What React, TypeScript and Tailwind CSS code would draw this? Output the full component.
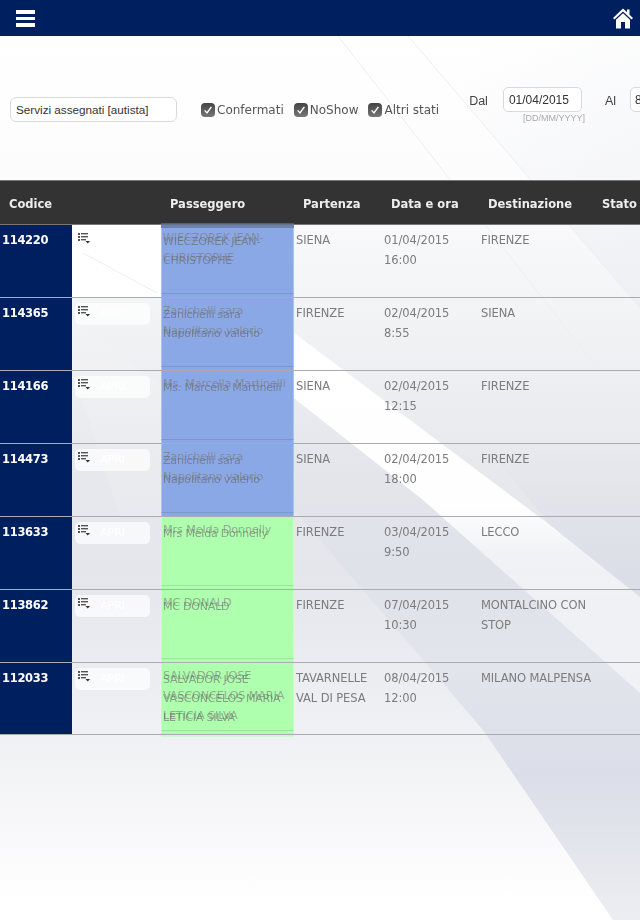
import React from "react";

const GRID = "grid grid-cols-[72px_89px_133px_89px_97px_114px_46px] w-[640px]";

type Row = { code: string; names: string[]; from: string[]; date: string; time: string; to: string[]; tone: "blue" | "green"; last?: boolean };

const rows: Row[] = [
  { code: "114220", names: ["WIECZOREK JEAN-", "CHRISTOPHE"], from: ["SIENA"], date: "01/04/2015", time: "16:00", to: ["FIRENZE"], tone: "blue" },
  { code: "114365", names: ["Zanichelli sara", "Napolitano valerio"], from: ["FIRENZE"], date: "02/04/2015", time: "8:55", to: ["SIENA"], tone: "blue" },
  { code: "114166", names: ["Ms. Marcella Martinelli"], from: ["SIENA"], date: "02/04/2015", time: "12:15", to: ["FIRENZE"], tone: "blue" },
  { code: "114473", names: ["Zanichelli sara", "Napolitano valerio"], from: ["SIENA"], date: "02/04/2015", time: "18:00", to: ["FIRENZE"], tone: "blue" },
  { code: "113633", names: ["Mrs Melda Donnelly"], from: ["FIRENZE"], date: "03/04/2015", time: "9:50", to: ["LECCO"], tone: "green" },
  { code: "113862", names: ["MC DONALD"], from: ["FIRENZE"], date: "07/04/2015", time: "10:30", to: ["MONTALCINO CON", "STOP"], tone: "green" },
  { code: "112033", names: ["SALVADOR JOSE", "VASCONCELOS MARIA", "LETICIA SILVA"], from: ["TAVARNELLE", "VAL DI PESA"], date: "08/04/2015", time: "12:00", to: ["MILANO MALPENSA"], tone: "green", last: true },
];

function Backdrop() {
  return (
    <svg className="absolute left-0 top-0" width="640" height="920" viewBox="0 0 640 920">
      <defs>
        <linearGradient id="base" x1="0" y1="0" x2="0" y2="920" gradientUnits="userSpaceOnUse">
          <stop offset="0.04" stopColor="#ffffff" />
          <stop offset="0.2" stopColor="#fcfcfd" />
          <stop offset="0.33" stopColor="#f3f4f6" />
          <stop offset="0.5" stopColor="#e8e9ed" />
          <stop offset="0.62" stopColor="#e4e6ec" />
          <stop offset="0.8" stopColor="#f0f1f4" />
          <stop offset="0.9" stopColor="#f8f8fa" />
          <stop offset="0.98" stopColor="#ffffff" />
        </linearGradient>
        <linearGradient id="band" x1="0" y1="330" x2="0" y2="700" gradientUnits="userSpaceOnUse">
          <stop offset="0" stopColor="#ffffff" stopOpacity="1" />
          <stop offset="0.48" stopColor="#ffffff" stopOpacity="0.95" />
          <stop offset="0.6" stopColor="#ffffff" stopOpacity="0.5" />
          <stop offset="1" stopColor="#ffffff" stopOpacity="0.2" />
        </linearGradient>
        <linearGradient id="dark" x1="0" y1="400" x2="0" y2="920" gradientUnits="userSpaceOnUse">
          <stop offset="0" stopColor="#c3c8da" stopOpacity="0.05" />
          <stop offset="0.5" stopColor="#c3c8da" stopOpacity="0.2" />
          <stop offset="0.72" stopColor="#c3c8da" stopOpacity="0.5" />
          <stop offset="1" stopColor="#c8ccd8" stopOpacity="0.35" />
        </linearGradient>
        <linearGradient id="rightGrey" x1="0" y1="440" x2="0" y2="600" gradientUnits="userSpaceOnUse">
          <stop offset="0" stopColor="#c3c8da" stopOpacity="0" />
          <stop offset="1" stopColor="#c3c8da" stopOpacity="0.3" />
        </linearGradient>
        <linearGradient id="topGrey" x1="460" y1="60" x2="640" y2="300" gradientUnits="userSpaceOnUse">
          <stop offset="0" stopColor="#e9ebf0" stopOpacity="0" />
          <stop offset="1" stopColor="#e9ebf0" stopOpacity="0.5" />
        </linearGradient>
      </defs>
      <rect x="0" y="0" width="640" height="920" fill="url(#base)" />
      <polygon points="0,225 161,225 161,297 72,297 0,297" fill="#ffffff" />
      <line x1="83" y1="253" x2="157" y2="293" stroke="#eceef1" strokeWidth="1" />
      <polygon points="83,330 161,385 161,516 120,516 72,370 72,320" fill="#ffffff" fillOpacity="0.12" />
      <polygon points="290,330 550,525 640,597 640,693 423,500 290,395" fill="url(#band)" />
      <polygon points="290,505 483,730 613,920 640,920 640,693 423,500 290,395" fill="url(#dark)" />
      <polygon points="480,440 640,440 640,597 550,525" fill="url(#rightGrey)" />
      <polygon points="408,36 640,308 640,36" fill="url(#topGrey)" />
      <line x1="338" y1="36" x2="640" y2="423" stroke="#eceef1" strokeWidth="1" />
      <line x1="408" y1="36" x2="640" y2="308" stroke="#eceef1" strokeWidth="1" />
    </svg>
  );
}

function Check({ label }: { label: string }) {
  return (
    <label className="flex items-center gap-[2px] text-[12px] leading-none text-[#555] font-['DejaVu_Sans',sans-serif] shrink-0">
      <span className="flex h-[14px] w-[14px] items-center justify-center rounded-[4px] bg-gradient-to-b from-[#444] to-[#777]">
        <svg width="10" height="10" viewBox="0 0 10 10" fill="none" stroke="#fff" strokeWidth="1.4">
          <path d="M1.6 5.4 L4 8 L8.4 1.8" />
        </svg>
      </span>
      {label}
    </label>
  );
}

function ListIcon() {
  return (
    <svg className="absolute left-[6px] top-[2px]" width="12" height="11" viewBox="0 0 12 11" fill="#555">
      <rect x="0" y="0" width="2" height="2" />
      <rect x="3" y="0" width="7" height="1.4" />
      <rect x="0" y="3" width="2" height="2" />
      <rect x="3" y="3" width="7" height="1.4" />
      <rect x="0" y="6" width="2" height="2" />
      <rect x="3" y="6" width="5" height="1.4" />
      <polygon points="7.5,8 12,8 9.75,10.5" fill="#333" />
    </svg>
  );
}

function TableRow({ row, index }: { row: Row; index: number }) {
  const isBlue = row.tone === "blue";
  return (
    <div className={`${GRID} ${row.last ? "h-[72px]" : "h-[73px]"} border-b border-[#a9abb0] text-[11.5px] tracking-[-0.1px] leading-[20px] text-[#7c7c7c] font-['DejaVu_Sans',sans-serif]`}>
      <div className="bg-[#001f5f] pl-[2px] pt-[5px] text-[11.5px] tracking-[-0.3px] font-bold text-white">{row.code}</div>
      <div className="relative pl-[3px] pt-[5px]">
        <div className="flex h-[22px] w-[75px] items-center justify-center rounded-[5px] bg-white/70 text-[11px] text-white">APRI</div>
        <div className="absolute left-0 top-[6px]"><ListIcon /></div>
      </div>
      <div className={`relative ${isBlue ? "bg-[#8ba8e6]" : "bg-[#aeffae]"} shadow-[inset_1px_0_0_rgba(255,255,255,0.3),inset_-1px_0_0_rgba(255,255,255,0.3)] pl-[2px] pt-[3px] text-[11.2px] leading-[20px] text-[#777]/60`}>
        {index === 0 && <div className="absolute -top-[2px] left-0 right-0 h-[5px] bg-[#5f7098]/70" />}
        {row.names.map((n) => (
          <div key={n} className="whitespace-nowrap">{n}</div>
        ))}
        <div className="absolute left-[2px] top-[7px] text-[11px] leading-[19px] tracking-[-0.2px] text-[#666]/60">
          {row.names.map((n) => (
            <div key={n} className="whitespace-nowrap">{n}</div>
          ))}
        </div>
        <div className="absolute bottom-[3px] left-0 right-0 h-px bg-black/10" />
        {row.last && <div className="absolute -bottom-[3px] left-0 right-0 h-[2px] bg-[#aeffae]/50" />}
      </div>
      <div className="pl-[2px] pt-[5px]">
        {row.from.map((t) => <div key={t}>{t}</div>)}
      </div>
      <div className="pl-px pt-[5px]">
        <div>{row.date}</div>
        <div>{row.time}</div>
      </div>
      <div className="pl-px pt-[5px]">
        {row.to.map((t) => <div key={t} className="whitespace-nowrap">{t}</div>)}
      </div>
      <div />
    </div>
  );
}

export default function App() {
  const head = ["Codice", "", "Passeggero", "Partenza", "Data e ora", "Destinazione", "Stato"];
  return (
    <div className="relative h-[920px] w-[640px] overflow-hidden">
      <Backdrop />
      <div className="relative blur-[0.35px]">
        <header className="flex h-[36px] items-center justify-between bg-[#001f5f] pl-[16px] pr-[7px]">
          <div className="flex w-[19px] flex-col gap-[3px]">
            <span className="h-[4px] bg-white" />
            <span className="h-[3.5px] bg-white" />
            <span className="h-[3.5px] bg-white" />
          </div>
          <svg width="20" height="21" viewBox="0 0 20 21" fill="#fff">
            <path d="M10 0.5 L0 10 L1.4 11.6 L10 3.5 L18.6 11.6 L20 10 L16.5 6.7 V1.5 H14 V4.3 Z" />
            <path d="M10 5.2 L3 11.8 V20.5 H8 V14 H12 V20.5 H17 V11.8 Z" />
          </svg>
        </header>

        <section className="flex h-[144px] w-[720px] items-start pl-[10px]">
          <div className="mt-[61px] flex h-[25px] w-[167px] shrink-0 items-center rounded-[6px] border border-[#d8d9dc] bg-white pl-[5px] font-['Liberation_Sans',sans-serif] text-[11.7px] text-[#333]">
            Servizi assegnati [autista]
          </div>
          <div className="ml-[24px] mt-[67px] flex shrink-0 gap-[10px]">
            <Check label="Confermati" />
            <Check label="NoShow" />
            <Check label="Altri stati" />
          </div>
          <div className="ml-[30px] mt-[58px] shrink-0 font-['Liberation_Sans',sans-serif] text-[12.5px] leading-[14px] text-[#444]">Dal</div>
          <div className="ml-[15px] mt-[51px] flex w-[84px] shrink-0 flex-col">
            <div className="flex h-[25px] w-[79px] items-center rounded-[5px] border border-[#d8d9dc] bg-white pl-[5px] font-['Liberation_Sans',sans-serif] text-[12px] text-[#333]">01/04/2015</div>
            <div className="mt-[1px] pl-[20px] font-['Liberation_Sans',sans-serif] text-[9px] leading-[11px] whitespace-nowrap text-[#aaa]">[DD/MM/YYYY]</div>
          </div>
          <div className="ml-[18px] mt-[58px] shrink-0 font-['Liberation_Sans',sans-serif] text-[12.5px] leading-[14px] text-[#444]">Al</div>
          <div className="ml-[14px] mt-[51px] flex h-[25px] w-[79px] shrink-0 items-center rounded-[5px] border border-[#d8d9dc] bg-white pl-[4px] font-['Liberation_Sans',sans-serif] text-[12px] text-[#333]">8/04/2015</div>
        </section>

        <div className={`${GRID} h-[45px] items-center border-y border-[#777] bg-[#333] pt-[5px] font-['DejaVu_Sans',sans-serif] text-[11.5px] font-bold text-[#eee]`}>
          {head.map((h, i) => (
            <div key={i} className={`${i === 0 ? "pl-[9px]" : i === 3 ? "pl-[9px]" : i === 2 ? "pl-[9px]" : "pl-[8px]"} whitespace-nowrap`}>{h}</div>
          ))}
        </div>

        {rows.map((r, i) => (
          <TableRow key={r.code} row={r} index={i} />
        ))}
      </div>
    </div>
  );
}
